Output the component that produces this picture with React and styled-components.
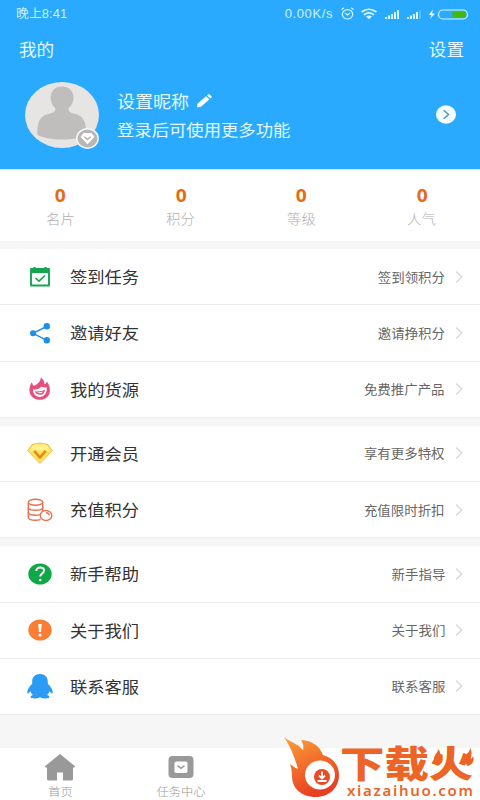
import React from "react"
import styled, { createGlobalStyle } from "styled-components"

const GlobalStyle = createGlobalStyle`
  * {
    box-sizing: border-box;
  }
  body {
    margin: 0;
    background: #f6f6f6;
    font-family: "Noto Sans CJK SC", sans-serif;
  }
  svg {
    display: block;
    flex-shrink: 0;
  }
`

const CheckIn = () => (
  <svg width="24" height="24" viewBox="0 0 24 24" fill="none">
    <path d="M3 4h18v16.500H3z" stroke="#12a650" strokeWidth="1.900" strokeLinejoin="round" />
    <path d="M3 3.500h18v4.500H3z" fill="#12a650" />
    <path d="M6.600 2v3M17.400 2v3" stroke="#12a650" strokeWidth="2.200" />
    <path d="M7.500 13l3.500 3.200 6-5.700" stroke="#12a650" strokeWidth="1.600" />
  </svg>
)

const Share = () => (
  <svg width="24" height="24" viewBox="0 0 24 24" fill="#1c8fe6">
    <path d="M18.800 5.300L5 12.300l13.800 7" fill="none" stroke="#1c8fe6" strokeWidth="1.500" />
    <circle cx="18.800" cy="5.300" r="3.200" />
    <circle cx="5" cy="12.300" r="3" />
    <circle cx="18.800" cy="19.300" r="3.200" />
  </svg>
)

const Fire = () => (
  <svg width="24" height="24" viewBox="0 0 24 24">
    <path
      d="M12.600 0.500c2.500 1.500 3.800 3.800 4 6.800 1.200-.5 2-1.400 2.300-2.800 2.200 3 3.400 6.500 3 9.900-.6 5-4.700 8.400-10 8.400S2 19.300 1.500 14.500C1.200 11 2 7.500 4 5c.1 1.700.7 3 1.800 3.800C9.500 7.200 13 4.500 12.600.5z"
      fill="#e5507c"
    />
    <path d="M5 12.500c3 .3 6.500-.8 8.300-2.800 1.500.6 3.500 1 5.500.7.500 5-2.500 9.500-7.200 9.500C7.500 19.900 5 16.500 5 12.500z" fill="#fff" />
    <path d="M7 14.300c3.300.3 7-.3 10-1.500-.3 3-2 5-4.700 5s-4.900-1.200-5.300-3.500z" fill="#e5507c" />
    <path d="M9.300 15.200c2.200.2 4 0 5.700-.7-.5 1.200-1.500 1.700-2.800 1.700-1.200 0-2.200-.3-2.900-1z" fill="#fff" />
  </svg>
)

const Member = () => (
  <svg width="26" height="22" viewBox="0 0 26 22">
    <path d="M5 2.500Q13-.5 21 2.500L25.300 8.800 13.500 21h-1L.700 8.800z" fill="#ffe25c" stroke="#f0bd56" strokeWidth="1" strokeLinejoin="round" />
    <path d="M6 3.500Q13 1 20 3.500l3 5H3z" fill="#fff08a" />
    <path d="M7.200 8.800l5.800 6.800 5.800-6.800" fill="none" stroke="#e28a18" strokeWidth="2.600" />
  </svg>
)

const Coins = () => (
  <svg width="26" height="24" viewBox="0 0 26 24" fill="none" stroke="#ea7150" strokeWidth="1.400">
    <ellipse cx="8.500" cy="4.300" rx="7.200" ry="3" />
    <path d="M1.300 4.300v15c0 1.800 3.200 3 7.200 3 2 0 3.700-.300 5-1M15.700 4.300v8.700" />
    <path d="M1.300 9.300c0 1.700 3.200 2.900 7.200 2.900s7.200-1.200 7.200-2.900M1.300 14.300c0 1.700 3.200 2.900 7.200 2.900 1.500 0 3-.2 4.200-.600" />
    <ellipse cx="19" cy="17.500" rx="5.800" ry="5" />
    <path d="M19 14.700c2 0 3 1 3.200 2.500" />
  </svg>
)

const Question = () => (
  <svg width="24" height="22" viewBox="0 0 24 22">
    <ellipse cx="12" cy="11" rx="11.700" ry="10.600" fill="#0ea846" />
    <path d="M8.300 8c0-2 1.700-3.400 3.800-3.400s3.900 1.200 3.900 3.100c0 2.600-3.800 2.800-3.800 5.800" fill="none" stroke="#fff" strokeWidth="2" />
    <circle cx="12.200" cy="17" r="1.300" fill="#fff" />
  </svg>
)

const About = () => (
  <svg width="24" height="22" viewBox="0 0 24 22">
    <ellipse cx="12" cy="11" rx="11.700" ry="10.600" fill="#f97d35" />
    <path d="M10.300 5h3.400l-.6 8h-2.200z" fill="#fff" />
    <circle cx="12" cy="15.900" r="1.500" fill="#fff" />
  </svg>
)

const Penguin = () => (
  <svg width="26" height="25" viewBox="0 0 26 25">
    <path
      d="M13 0C8 0 5.200 3.400 5.200 7.500v2.300C2.500 12.500.300 15.500.300 18.200c0 1.800 1 1.500 2 .3l1.200-1.200c.4 1.500 1.200 2.800 2.300 3.800-1.700.700-2.500 1.600-2.100 2.500.5 1.200 6.900 1.300 9.300-.4 2.400 1.700 8.800 1.600 9.300.4.400-.9-.4-1.800-2.100-2.500 1.100-1 1.900-2.300 2.300-3.800l1.200 1.200c1 1.200 2 1.500 2-.3 0-2.700-2.200-5.700-4.900-8.400V7.500C20.800 3.400 18 0 13 0z"
      fill="#2b9bf4"
    />
  </svg>
)

const groups = [
  [
    { icon: <CheckIn />, title: "签到任务", hint: "签到领积分" },
    { icon: <Share />, title: "邀请好友", hint: "邀请挣积分" },
    { icon: <Fire />, title: "我的货源", hint: "免费推广产品" },
  ],
  [
    { icon: <Member />, title: "开通会员", hint: "享有更多特权" },
    { icon: <Coins />, title: "充值积分", hint: "充值限时折扣" },
  ],
  [
    { icon: <Question />, title: "新手帮助", hint: "新手指导" },
    { icon: <About />, title: "关于我们", hint: "关于我们" },
    { icon: <Penguin />, title: "联系客服", hint: "联系客服" },
  ],
]

const stats = ["名片", "积分", "等级", "人气"]

const StatusIcons = () => (
  <svg width="130" height="16" viewBox="0 0 130 16" fill="none" stroke="#d9f6ff">
    <ellipse cx="8.500" cy="8.300" rx="5.200" ry="4.700" strokeWidth="1.200" />
    <path d="M6 7l2.500 2L11 7M2.500 3.500L5 1.800M14.500 3.500L12 1.800" strokeWidth="1.200" />
    <path d="M22.500 6q7.500-5.500 15 0M25 8.700q5-3.500 10 0" strokeWidth="1.700" />
    <path d="M27 10.500q3-2 6 0l-3 2.700z" fill="#d9f6ff" stroke="none" />
    <path d="M47 13v-2M50 13v-3.500M53 13V8M56 13V6M59 13V4" strokeWidth="2" />
    <path d="M69 13v-2M72 13v-3.500M75 13V8M78 13V6" strokeWidth="2" />
    <path d="M81 13V4" strokeWidth="2" opacity=".25" />
    <path d="M94 3.500L89.500 9h3L91 13l5-5.500h-3z" fill="#e4fbff" stroke="none" />
    <rect x="99.500" y="4" width="29" height="9" rx="4.500" strokeWidth="1.200" />
    <path d="M113.500 5.500h10.500a3 3 0 0 1 0 6h-10.500z" fill="#43b70b" stroke="none" />
  </svg>
)

const App = () => {
  return (
    <Page>
      <GlobalStyle />
      <Header>
        <StatusBar>
          <Clock>晚上8:41</Clock>
          <Status>
            <Speed>0.00K/s</Speed>
            <StatusIcons />
          </Status>
        </StatusBar>
        <TitleBar>
          <Wide $size={16.5}>我的</Wide>
          <Wide $size={16.5} $right>设置</Wide>
        </TitleBar>
        <Profile>
          <Avatar>
            <svg width="74" height="66" viewBox="0 0 74 66">
              <ellipse cx="37" cy="33" rx="37" ry="33" fill="#e6e5e3" />
              <path
                d="M37 4.500c-7 0-11.300 4.500-11.300 11 0 5 2 8.500 4.500 10.500.7 2.500-.7 4.500-5 5.500C16 33.500 12.500 37 12.300 53c6 3 15 4.500 24.700 4.500S55 56.500 61.500 53c-.3-15.500-4-19.500-13-21.500-4.300-1-5.500-3-4.800-5.500 2.500-2 4.800-5.500 4.800-10.500C48.500 9 44 4.500 37 4.500z"
                fill="#c0bebd"
              />
            </svg>
            <Badge>
              <svg width="23" height="21" viewBox="0 0 23 21">
                <ellipse cx="11.500" cy="10.500" rx="10.700" ry="9.700" fill="#b9b7b5" stroke="#f5f8f8" strokeWidth="1.400" />
                <path d="M7.500 5h8l3 4-7 7.200-7-7.200z" fill="#fff" />
                <path d="M8.300 8.700l3.200 2.800 3.200-2.800" fill="none" stroke="#b9a99c" strokeWidth="1.300" />
              </svg>
            </Badge>
          </Avatar>
          <Names>
            <Nickname>
              <Wide $size={16.9}>设置昵称</Wide>
              <svg width="15" height="14" viewBox="0 0 15 14" fill="#fff">
                <path d="M0 13.500l.5-3.700L9 2.200l3.400 3L4 12.800zM10 1.400L11.200.400q.8-.6 1.600 0l1.600 1.500q.8.800 0 1.500l-1.100 1z" />
              </svg>
            </Nickname>
            <Wide $size={16.25}>登录后可使用更多功能</Wide>
          </Names>
          <svg width="20" height="19" viewBox="0 0 20 19">
            <ellipse cx="10" cy="9.500" rx="10" ry="9.300" fill="#f4ffff" />
            <path d="M7.700 5.200l4.800 4.300-4.800 4.300" fill="none" stroke="#5b92b3" strokeWidth="1.500" />
          </svg>
        </Profile>
      </Header>

      <Stats>
        {stats.map((name) => (
          <Stat key={name}>
            <strong>0</strong>
            <span>{name}</span>
          </Stat>
        ))}
      </Stats>

      {groups.map((rows, i) => (
        <Group key={i}>
          {rows.map(({ icon, title, hint }) => (
            <Row key={title}>
              <IconBox>{icon}</IconBox>
              <RowTitle>{title}</RowTitle>
              <Hint>{hint}</Hint>
              <svg width="8" height="14" viewBox="0 0 8 14" fill="none" stroke="#d6d6d6" strokeWidth="1.300">
                <path d="M1 1.500L6.800 7 1 12.500" />
              </svg>
            </Row>
          ))}
        </Group>
      ))}

      <TabBar>
        <Tab>
          <svg width="30" height="27" viewBox="0 0 30 27" fill="#999">
            <path d="M15 0L30 12.300q.3 1.200-1 1.200h-1V25q0 1.500-1.500 1.500H18V18.500h-6v8H3.500Q2 26.500 2 25V13.500H1Q-.3 13.500 0 12.300z" />
          </svg>
          <span>首页</span>
        </Tab>
        <Tab>
          <svg width="30" height="27" viewBox="0 0 30 27">
            <rect x="2.500" y="2" width="25" height="22" rx="4" fill="#999" />
            <rect x="8.500" y="7.500" width="13" height="11.500" rx="1.800" fill="#fff" />
            <path d="M11.500 11.700l3.500 2.600 3.500-2.600" fill="none" stroke="#999" strokeWidth="1.500" />
          </svg>
          <span>任务中心</span>
        </Tab>
      </TabBar>

      <Watermark>
        <svg width="57" height="61" viewBox="0 0 57 61">
          <defs>
            <linearGradient id="flame" x1="0" y1="0" x2=".4" y2="1">
              <stop offset="0" stopColor="#f9a23a" />
              <stop offset=".5" stopColor="#f3702c" />
              <stop offset="1" stopColor="#e83f22" />
            </linearGradient>
          </defs>
          <path
            d="M0 0C6 5 13 6 19 13c1-4 0-7-2-10 11 1 18 5 22 15 10 3 16 10 16 20 0 13-10 22-23 22C17 60 8 51 8 39c0-5-1-9-2-12 3 2 5 4 8 5C12 25 8 12 0 0z"
            fill="url(#flame)"
          />
          <ellipse cx="36" cy="38" rx="15" ry="14.500" fill="#fff" />
          <circle cx="38" cy="40" r="8" fill="#eb4a25" />
          <path d="M38 34.500v6M35 38.500l3 3 3-3M33.500 44h9" fill="none" stroke="#fff" strokeWidth="1.800" />
        </svg>
        <Brand>
          <BrandName>下载火</BrandName>
          <Sparks>
            <svg width="42" height="19" viewBox="0 0 42 19" fill="#ec6426">
              <path d="M5 1c0 4-4 6-4 10 0 3 1.500 5 4 6.500C9 16 11 12 9 7c-.5 2-1 3-2 3.500C8 7 7.500 3.500 5 1z" />
              <path d="M37 0c.5 4-5 6-5.500 10.500 0 3 1 5 3 7.500C39 17 42 13 40 8c-.6 1.500-1.300 2.500-2.300 3C38.500 7 39.500 3.500 37 0z" />
            </svg>
          </Sparks>
          <BrandUrl>xiazaihuo.com</BrandUrl>
        </Brand>
      </Watermark>
    </Page>
  )
}

const Page = styled.div`
  position: relative;
  display: flex;
  flex-direction: column;
  width: 480px;
  height: 800px;
  overflow: hidden;
  background: #f6f6f6;
`

/* letters are a bit wider than they are tall */
const Wide = styled.span`
  display: inline-block;
  font-size: ${({ $size }) => $size}px;
  line-height: 24px;
  white-space: nowrap;
  transform: scaleX(1.067);
  transform-origin: ${({ $right }) => ($right ? "right" : "left")} center;
`

const Header = styled.header`
  height: 170px;
  background: #29aaff;
  border-bottom: 1px solid #c9f3fd;
  color: #e2faff;
`

const StatusBar = styled.div`
  display: flex;
  justify-content: space-between;
  align-items: center;
  height: 27px;
  padding: 0 11px 0 16px;
  color: #cdf3ff;
`

const Clock = styled(Wide)`
  font-size: 12px;
  font-family: "Liberation Sans", "Noto Sans CJK SC", sans-serif;
  letter-spacing: 0.1px;
`

const Status = styled.div`
  display: flex;
  align-items: center;
  gap: 6px;
`

const Speed = styled.span`
  font: 13px/16px "Liberation Sans", sans-serif;
  letter-spacing: 0.6px;
`

const TitleBar = styled.div`
  display: flex;
  justify-content: space-between;
  align-items: center;
  height: 44px;
  padding: 0 16px 0 19px;
`

const Profile = styled.div`
  display: flex;
  align-items: center;
  height: 87px;
  padding: 0 24px 0 25px;
`

const Avatar = styled.div`
  position: relative;
  width: 74px;
`

const Badge = styled.div`
  position: absolute;
  right: 0;
  bottom: -1px;
`

const Names = styled.div`
  display: flex;
  flex: 1;
  flex-direction: column;
  align-items: flex-start;
  gap: 4px;
  margin-left: 18px;
`

const Nickname = styled.div`
  display: flex;
  align-items: center;
  gap: 12px;
`

const Stats = styled.section`
  display: grid;
  grid-template-columns: repeat(4, 120.500px);
  height: 71px;
  background: #fff;
`

const Stat = styled.div`
  display: flex;
  flex-direction: column;
  align-items: center;
  padding-top: 14px;
  strong {
    color: #e36c17;
    font: bold 18px/22px "Open Sans", sans-serif;
    transform: scaleX(1.067);
  }
  span {
    margin-top: 1px;
    color: #b1b1b1;
    font-size: 13.500px;
    font-weight: 300;
    line-height: 22px;
    transform: scaleX(1.067);
  }
`

const Group = styled.section`
  margin-top: 8px;
  background: #fff;
`

const Row = styled.div`
  display: flex;
  align-items: center;
  height: 56.250px;
  padding: 0 17px 0 26px;
  border-bottom: 1px solid #ededed;
`

const IconBox = styled.div`
  display: flex;
  justify-content: center;
  width: 28px;
`

const RowTitle = styled(Wide).attrs({ $size: 16.2 })`
  flex: 1;
  margin: -1px 0 0 16px;
  color: #333;
`

const Hint = styled(Wide).attrs({ $size: 12.6, $right: true })`
  margin-right: 10px;
  color: #666;
`

const TabBar = styled.nav`
  display: grid;
  grid-template-columns: repeat(4, 120.500px);
  height: 52px;
  margin-top: auto;
  background: #fff;
`

const Tab = styled.div`
  display: flex;
  flex-direction: column;
  align-items: center;
  padding-top: 6px;
  color: #999;
  span {
    font-size: 11.500px;
    font-weight: 300;
    line-height: 20px;
    transform: scaleX(1.067);
  }
`

const Watermark = styled.div`
  position: absolute;
  right: 3px;
  bottom: 2px;
  display: flex;
  width: 193px;
  height: 61px;
  color: #ec6426;
`

const Brand = styled.div`
  position: relative;
  width: 136px;
  padding-top: 7px;
  margin-left: -1px;
`

const BrandName = styled.div`
  font-size: 37px;
  font-weight: 900;
  line-height: 37px;
  white-space: nowrap;
  transform: scaleX(1.2);
  transform-origin: left center;
`

/* little flames on both sides of the last character */
const Sparks = styled.div`
  position: absolute;
  top: 11px;
  right: 1px;
`

const BrandUrl = styled.div`
  margin: 2px 0 0 7px;
  font: 600 15px/15px "Noto Sans", sans-serif;
  letter-spacing: 1.700px;
`

export default App
